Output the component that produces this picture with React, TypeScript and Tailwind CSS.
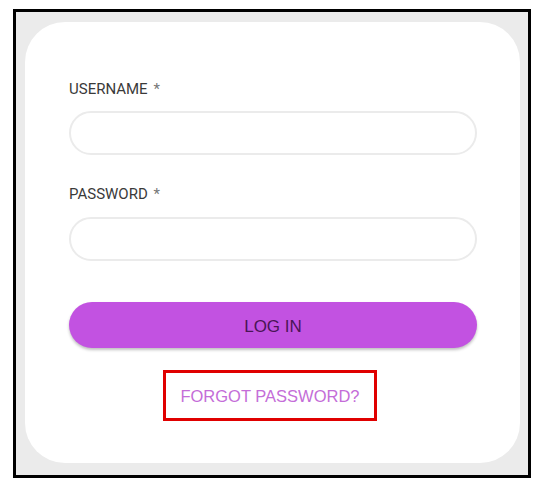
import React from 'react';

export default function App() {
  return (
    <div className="min-h-screen bg-white pl-[13px] pt-[9px]" style={{ fontFamily: 'Roboto, "Liberation Sans", sans-serif' }}>
      <div className="w-[518px] h-[469px] border-[3px] border-black bg-[#ebebeb] pl-[9px] pr-[8px] pt-[10px] pb-[12px]">
        <div className="h-full rounded-[40px] bg-white pl-[44px] pr-[42px] pt-[57px]">
          <label className="block text-[15px] leading-[20px] text-[#3a3a3a]">
            USERNAME <span className="ml-[2px] text-[#777]">*</span>
          </label>
          <input
            type="text"
            className="mt-[12px] block h-[44px] w-[408px] rounded-full border-2 border-[#ebebeb] bg-white outline-none"
          />
          <label className="mt-[29px] block text-[15px] leading-[20px] text-[#3a3a3a]">
            PASSWORD <span className="ml-[2px] text-[#777]">*</span>
          </label>
          <input
            type="password"
            className="mt-[13px] block h-[44px] w-[408px] rounded-full border-2 border-[#ebebeb] bg-white outline-none"
          />
          <button
            type="button"
            className="mt-[41px] flex h-[46px] w-[408px] items-center justify-center rounded-full bg-[#c252e1] pt-[4px] text-[17px] text-[#4a1556] shadow-[0_2px_3px_rgba(0,0,0,0.25)]"
            style={{ fontFamily: '"Liberation Sans", Arial, sans-serif' }}
          >
            LOG IN
          </button>
          <div className="mt-[22px] flex">
            <a
              href="#"
              className="ml-[94px] flex h-[51px] w-[214px] items-center justify-center border-[3px] border-[#e00000] pt-[2px] text-[16.5px] text-[#c46dd8]"
              style={{ fontFamily: '"Liberation Sans", Arial, sans-serif' }}
            >
              FORGOT PASSWORD?
            </a>
          </div>
        </div>
      </div>
    </div>
  );
}
